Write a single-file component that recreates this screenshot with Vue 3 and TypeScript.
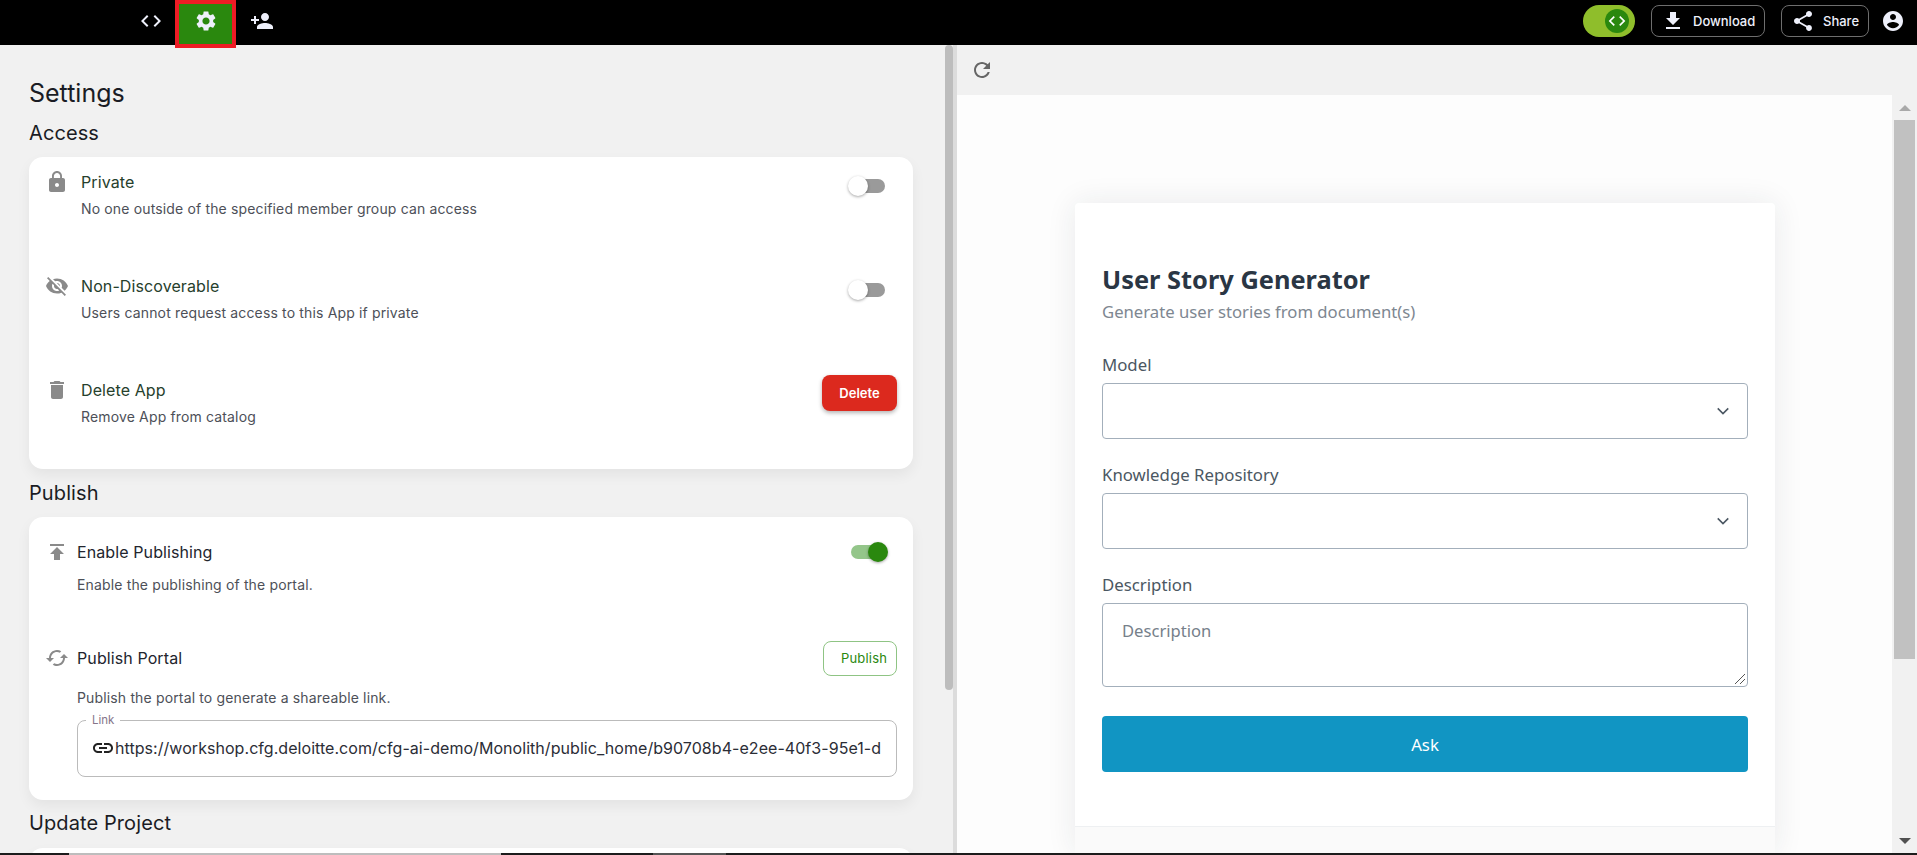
<script setup lang="ts">
const iconCode = 'M9.4 16.6 4.8 12l4.6-4.6L8 6l-6 6 6 6 1.4-1.4zm5.2 0 4.6-4.6-4.6-4.6L16 6l6 6-6 6-1.4-1.4z'
const gear = 'M19.14 12.94c.04-.3.06-.61.06-.94 0-.32-.02-.64-.07-.94l2.03-1.58c.18-.14.23-.41.12-.61l-1.92-3.32c-.12-.22-.37-.29-.59-.22l-2.39.96c-.5-.38-1.03-.7-1.62-.94l-.36-2.54c-.04-.24-.24-.41-.48-.41h-3.84c-.24 0-.43.17-.47.41l-.36 2.54c-.59.24-1.13.57-1.62.94l-2.39-.96c-.22-.08-.47 0-.59.22L2.74 8.87c-.12.21-.08.47.12.61l2.03 1.58c-.05.3-.09.63-.09.94s.02.64.07.94l-2.03 1.58c-.18.14-.23.41-.12.61l1.92 3.32c.12.22.37.29.59.22l2.39-.96c.5.38 1.03.7 1.62.94l.36 2.54c.05.24.24.41.48.41h3.84c.24 0 .44-.17.47-.41l.36-2.54c.59-.24 1.13-.56 1.62-.94l2.39.96c.22.08.47 0 .59-.22l1.92-3.32c.12-.22.07-.47-.12-.61l-2.01-1.58zM12 15.6c-1.98 0-3.6-1.62-3.6-3.6s1.62-3.6 3.6-3.6 3.6 1.62 3.6 3.6-1.62 3.6-3.6 3.6z'
const personAdd = 'M15 12c2.21 0 4-1.79 4-4s-1.79-4-4-4-4 1.79-4 4 1.79 4 4 4zm-9-2V7H4v3H1v2h3v3h2v-3h3v-2H6zm9 4c-2.67 0-8 1.34-8 4v2h16v-2c0-2.66-5.33-4-8-4z'
const account = 'M12 2C6.48 2 2 6.48 2 12s4.48 10 10 10 10-4.48 10-10S17.52 2 12 2zm0 3c1.66 0 3 1.34 3 3s-1.34 3-3 3-3-1.34-3-3 1.34-3 3-3zm0 14.2c-2.5 0-4.71-1.28-6-3.22.03-1.99 4-3.08 6-3.08 1.99 0 5.97 1.09 6 3.08-1.29 1.94-3.5 3.22-6 3.22z'
const download = 'M19 9h-4V3H9v6H5l7 7 7-7zM5 18v2h14v-2H5z'
const share = 'M18 16.08c-.76 0-1.44.3-1.96.77L8.91 12.7c.05-.23.09-.46.09-.7s-.04-.47-.09-.7l7.05-4.11c.54.5 1.25.81 2.04.81 1.66 0 3-1.34 3-3s-1.34-3-3-3-3 1.34-3 3c0 .24.04.47.09.7L8.04 9.81C7.5 9.31 6.79 9 6 9c-1.66 0-3 1.34-3 3s1.34 3 3 3c.79 0 1.5-.31 2.04-.81l7.12 4.16c-.05.21-.08.43-.08.65 0 1.61 1.31 2.92 2.92 2.92s2.92-1.31 2.92-2.92-1.31-2.92-2.92-2.92z'
const refresh = 'M17.65 6.35C16.2 4.9 14.21 4 12 4c-4.42 0-7.99 3.58-7.99 8s3.57 8 7.99 8c3.73 0 6.84-2.55 7.73-6h-2.08c-.82 2.33-3.04 4-5.65 4-3.31 0-6-2.69-6-6s2.69-6 6-6c1.66 0 3.14.69 4.22 1.78L13 11h7V4l-2.35 2.35z'
const lock = 'M18 8h-1V6c0-2.76-2.24-5-5-5S7 3.24 7 6v2H6c-1.1 0-2 .9-2 2v10c0 1.1.9 2 2 2h12c1.1 0 2-.9 2-2V10c0-1.1-.9-2-2-2zm-6 9c-1.1 0-2-.9-2-2s.9-2 2-2 2 .9 2 2-.9 2-2 2zm3.1-9H8.9V6c0-1.71 1.39-3.1 3.1-3.1 1.71 0 3.1 1.39 3.1 3.1v2z'
const eyeOff = 'M12 7c2.76 0 5 2.24 5 5 0 .65-.13 1.26-.36 1.83l2.92 2.92c1.51-1.26 2.7-2.89 3.43-4.75-1.73-4.39-6-7.5-11-7.5-1.4 0-2.74.25-3.98.7l2.16 2.16C10.74 7.13 11.35 7 12 7zM2 4.27l2.28 2.28.46.46C3.08 8.3 1.78 10.02 1 12c1.73 4.39 6 7.5 11 7.5 1.55 0 3.03-.3 4.38-.84l.42.42L19.73 22 21 20.73 3.27 3 2 4.27zM7.53 9.8l1.55 1.55c-.05.21-.08.43-.08.65 0 1.66 1.34 3 3 3 .22 0 .44-.03.65-.08l1.55 1.55c-.67.33-1.41.53-2.2.53-2.76 0-5-2.24-5-5 0-.79.2-1.53.53-2.2zm4.31-.78 3.15 3.15.02-.16c0-1.66-1.34-3-3-3l-.17.01z'
const trash = 'M6 19c0 1.1.9 2 2 2h8c1.1 0 2-.9 2-2V7H6v12zM19 4h-3.5l-1-1h-5l-1 1H5v2h14V4z'
const publish = 'M5 4v2h14V4H5zm0 10h4v6h6v-6h4l-7-7-7 7z'
const syncAlt = 'M12 4V1L8 5l4 4V6c3.31 0 6 2.69 6 6 0 1.01-.25 1.97-.7 2.8l1.46 1.46C19.54 15.03 20 13.57 20 12c0-4.42-3.58-8-8-8zm0 14c-3.31 0-6-2.69-6-6 0-1.01.25-1.97.7-2.8L5.24 7.74C4.46 8.97 4 10.43 4 12c0 4.42 3.58 8 8 8v3l4-4-4-4v3z'
const link = 'M3.9 12c0-1.71 1.39-3.1 3.1-3.1h4V7H7c-2.76 0-5 2.24-5 5s2.24 5 5 5h4v-1.9H7c-1.71 0-3.1-1.39-3.1-3.1zM8 13h8v-2H8v2zm9-6h-4v1.9h4c1.71 0 3.1 1.39 3.1 3.1s-1.39 3.1-3.1 3.1h-4V17h4c2.76 0 5-2.24 5-5s-2.24-5-5-5z'
</script>

<template>
  <div class="page">
    <header class="topbar">
      <div class="tabs">
        <button class="tab"><svg viewBox="0 0 24 24" class="i24"><path :d="iconCode" /></svg></button>
        <button class="tab active"><svg viewBox="0 0 24 24" class="i24"><path :d="gear" /></svg></button>
        <button class="tab last"><svg viewBox="0 0 24 24" class="i24"><path :d="personAdd" /></svg></button>
      </div>
      <div class="actions">
        <div class="mode"><span class="knob"><svg viewBox="0 0 24 24" class="i20"><path :d="iconCode" /></svg></span></div>
        <button class="hbtn dl"><svg viewBox="0 0 24 24" class="i24"><path :d="download" /></svg>Download</button>
        <button class="hbtn sh"><svg viewBox="0 0 24 24" class="i24"><path :d="share" /></svg>Share</button>
        <svg viewBox="0 0 24 24" class="i24 acct"><path :d="account" /></svg>
      </div>
    </header>

    <main class="split">
      <section class="left">
        <div class="leftscroll">
          <h1>Settings</h1>
          <h2>Access</h2>
          <div class="card access">
            <div class="row r1">
              <svg viewBox="0 0 24 24" class="i24 ic"><path :d="lock" /></svg>
              <div class="txt"><div class="ttl green">Private</div><div class="sub">No one outside of the specified member group can access</div></div>
              <span class="sw"><i class="track" /><i class="thumb" /></span>
            </div>
            <div class="row r2">
              <svg viewBox="0 0 24 24" class="i24 ic"><path :d="eyeOff" /></svg>
              <div class="txt"><div class="ttl green">Non-Discoverable</div><div class="sub">Users cannot request access to this App if private</div></div>
              <span class="sw"><i class="track" /><i class="thumb" /></span>
            </div>
            <div class="row r3">
              <svg viewBox="0 0 24 24" class="i24 ic"><path :d="trash" /></svg>
              <div class="txt"><div class="ttl green">Delete App</div><div class="sub">Remove App from catalog</div></div>
              <button class="del">Delete</button>
            </div>
          </div>
          <h2 class="pub">Publish</h2>
          <div class="card publish">
            <div class="prow p1">
              <svg viewBox="0 0 24 24" class="i24 ic"><path :d="publish" /></svg>
              <div class="txt"><div class="ttl">Enable Publishing</div><div class="sub s2">Enable the publishing of the portal.</div></div>
              <span class="sw on"><i class="track" /><i class="thumb" /></span>
            </div>
            <div class="prow p2">
              <svg viewBox="0 0 24 24" class="i24 ic"><path :d="syncAlt" transform="rotate(90 12 12)" /></svg>
              <div class="txt"><div class="ttl">Publish Portal</div></div>
              <button class="pubbtn">Publish</button>
            </div>
            <div class="sub s3">Publish the portal to generate a shareable link.</div>
            <fieldset class="linkbox">
              <legend>Link</legend>
              <svg viewBox="0 0 24 24" class="i24 lk"><path :d="link" /></svg>
              <div class="url">https://workshop.cfg.deloitte.com/cfg-ai-demo/Monolith/public_home/b90708b4-e2ee-40f3-95e1-d</div>
            </fieldset>
          </div>
          <h2 class="upd">Update Project</h2>
          <div class="card stub" />
        </div>
        <div class="lthumb" />
      </section>
      <div class="divider" />

      <section class="right">
        <div class="rtool"><svg viewBox="0 0 24 24" class="i24 rf"><path :d="refresh" /></svg></div>
        <div class="rbody">
          <div class="preview">
            <div class="formcard">
              <div class="formin">
                <h3>User Story Generator</h3>
                <p class="lead">Generate user stories from document(s)</p>
                <label>Model</label>
                <div class="sel"><svg viewBox="0 0 16 16" class="chev"><path d="m2 5 6 6 6-6" /></svg></div>
                <label>Knowledge Repository</label>
                <div class="sel"><svg viewBox="0 0 16 16" class="chev"><path d="m2 5 6 6 6-6" /></svg></div>
                <label>Description</label>
                <div class="ta">Description
                  <svg viewBox="0 0 12 12" class="grip"><path d="M1 11 11 1M6 11l5-5" /></svg>
                </div>
                <button class="ask">Ask</button>
              </div>
              <div class="formfoot" />
            </div>
          </div>
          <div class="rscroll">
            <span class="up" /><div class="rthumb" /><span class="down" />
          </div>
        </div>
      </section>
    </main>
    <div class="hbar"><i class="b1" /><i class="b2" /><i class="b3" /><i class="b4" /></div>
  </div>
</template>

<style>
html, body { margin: 0; height: 100%; overflow: hidden; background: #fff; }
</style>

<style scoped>
.page { width: 1917px; height: 855px; overflow: hidden; display: flex; flex-direction: column; font-family: Inter, "Liberation Sans", sans-serif; position: relative; }
button { font-family: inherit; cursor: pointer; }
svg { fill: currentColor; display: block; flex: none; }
.i24 { width: 24px; height: 24px; }
.i20 { width: 20px; height: 20px; }

.topbar { height: 45px; flex: none; background: #000; display: flex; justify-content: space-between; align-items: flex-start; color: #eef0fb; }
.tabs { display: flex; margin-left: 126px; }
.tab { width: 49px; height: 42px; padding: 0; background: none; border: 0; color: #eef0fb; display: flex; align-items: center; justify-content: center; }
.tab.active { box-sizing: border-box; width: 61px; height: 48px; background: #2a880e; border: 4px solid #ee1c25; position: relative; z-index: 2; padding-bottom: 6px; }
.tab.last { width: 52px; }
.actions { display: flex; align-items: center; height: 42px; margin-right: 12px; }
.mode { width: 52px; height: 32px; border-radius: 16px; background: #8fbe2b; position: relative; margin-right: 16px; }
.knob { position: absolute; right: 6px; top: 4px; width: 24px; height: 24px; border-radius: 50%; background: #2a880e; display: flex; align-items: center; justify-content: center; color: #fff; }
.hbtn { height: 32px; box-sizing: border-box; background: none; border: 1px solid #6e6e6e; border-radius: 8px; color: #eef0fb; font-size: 13px; font-weight: 500; display: flex; align-items: center; padding: 0 0 0 9px; gap: 8px; }
.dl { width: 114px; margin-right: 16px; }
.sh { width: 88px; margin-right: 12px; }

.split { flex: 1; display: flex; min-height: 0; }
.left { width: 953px; flex: none; background: #f1f1f1; position: relative; overflow: hidden; }
.divider { width: 4px; flex: none; background: #dcdcdc; }
.leftscroll { padding: 0 29px; box-sizing: border-box; }
h1 { margin: 33px 0 0; font-size: 25px; line-height: 30px; font-weight: 400; color: #1a1c24; }
h2 { margin: 10px 0 0; font-size: 20px; line-height: 30px; font-weight: 400; color: #1a1c24; letter-spacing: .1px; }
.card { background: #fff; border-radius: 14px; box-shadow: 0 6px 14px rgba(0,0,0,.06); margin-top: 9px; width: 884px; box-sizing: border-box; }
.access { height: 312px; padding: 0 16px; }
.row { display: flex; align-items: flex-start; height: 104px; padding-top: 13px; box-sizing: border-box; }
.ic { color: #8a8a8a; }
.txt { margin-left: 12px; flex: 1; min-width: 0; }
.ttl { font-size: 16px; line-height: 24px; color: #22252e; letter-spacing: .1px; }
.green { color: #26402c; }
.sub { font-size: 14px; line-height: 20px; color: #4d5058; margin-top: 5px; letter-spacing: .15px; }
.sw { width: 37px; height: 22px; position: relative; margin: 5px 12px 0 0; flex: none; }
.track { position: absolute; left: 5px; right: 0; top: 4px; height: 14px; border-radius: 7px; background: #9a9a9a; }
.thumb { position: absolute; left: 0; top: 1px; width: 20px; height: 20px; border-radius: 50%; background: #fff; box-shadow: 0 1px 3px rgba(0,0,0,.35); }
.sw.on { margin: 1px 9px 0 0; }
.sw.on .track { left: 0; right: 2px; background: #94c68a; }
.sw.on .thumb { left: 17px; background: #2a880e; }
.del { width: 75px; height: 36px; border: 0; border-radius: 8px; background: #dc291e; color: #fff; font-size: 13px; font-weight: 600; box-shadow: 0 2px 4px rgba(0,0,0,.3); padding: 0; margin-top: -3px; }

h2.pub { margin-top: 9px; }
.publish { height: 283px; padding: 0 16px; }
.prow { display: flex; align-items: flex-start; }
.prow .txt { margin-left: 8px; }
.p1 { height: 118px; padding-top: 23px; box-sizing: border-box; }
.sub.s2 { margin-top: 11px; }
.p2 { height: 46px; align-items: center; }
.pubbtn { width: 74px; height: 35px; box-sizing: border-box; border: 1px solid #8fc484; border-radius: 8px; background: #fff; color: #2a880e; font-size: 13px; font-weight: 400; letter-spacing: .2px; padding: 0 0 0 8px; }
.sub.s3 { margin: 7px 0 0 32px; }
.linkbox { margin: 6px 0 0 32px; padding: 0 13px; border: 1px solid #bbb; border-radius: 8px; height: 63px; box-sizing: border-box; display: flex; align-items: center; min-width: 0; width: 820px; }
.linkbox legend { font-size: 11.5px; line-height: 12px; color: #85758a; padding: 0 6px; margin-left: -5px; }
.lk { color: #222; margin-top: -6px; }
.url { font-size: 16px; line-height: 24px; color: #2b2d36; white-space: nowrap; overflow: hidden; flex: 1; min-width: 0; margin-top: -6px; letter-spacing: .05px; }
h2.upd { margin-top: 8px; }
.stub { height: 60px; margin-top: 10px; }
.lthumb { position: absolute; right: 0; top: 0; width: 8px; height: 645px; background: #bdbdbd; border-radius: 4px; }

.right { flex: 1; display: flex; flex-direction: column; min-width: 0; }
.rtool { height: 50px; background: #f1f1f1; display: flex; align-items: center; flex: none; }
.rf { color: #666; margin-left: 13px; }
.rbody { flex: 1; display: flex; min-height: 0; background: #fff; }
.preview { flex: 1; min-width: 0; padding: 108px 0 0 118px; box-sizing: border-box; background: #fdfdfd; overflow: hidden; }
.formcard { width: 700px; height: 650px; background: #fff; box-shadow: 0 0 30px rgba(30,40,60,.09); border-radius: 4px 4px 0 0; }
.formin { height: 624px; padding: 60px 27px 0; box-sizing: border-box; border-bottom: 1px solid #eef0f2; }
.formfoot { height: 26px; background: #fafafa; }
h3 { margin: 0; font-family: "Noto Sans", "Open Sans", sans-serif; font-weight: 700; font-size: 25.4px; line-height: 32px; color: #2a3644; }
.lead { margin: 5px 0 29px; font-family: "Noto Sans", sans-serif; font-size: 16.7px; line-height: 24px; color: #7e8791; }
label { display: block; font-family: "Noto Sans", sans-serif; font-size: 16.8px; line-height: 24px; color: #4b5762; }
.sel { height: 56px; box-sizing: border-box; border: 1px solid #a3afbb; border-radius: 4px; margin: 6px 0 24px; position: relative; }
.chev { position: absolute; right: 17px; top: 20px; width: 14px; height: 14px; fill: none; stroke: #4b5762; stroke-width: 1.8; }
.ta { height: 84px; box-sizing: border-box; border: 1px solid #a3afbb; border-radius: 4px; margin-top: 6px; padding: 15px 19px; font-family: "Noto Sans", sans-serif; font-size: 16.6px; line-height: 24px; color: #76808a; position: relative; }
.grip { position: absolute; right: 1px; bottom: 1px; width: 12px; height: 12px; fill: none; stroke: #555; stroke-width: 1; }
.ask { display: block; width: 100%; height: 56px; margin-top: 29px; border: 0; border-radius: 4px; background: #1195c3; color: #fff; font-family: "Noto Sans", sans-serif; font-size: 16.8px; }
.rscroll { width: 25px; flex: none; background: #f1f1f1; position: relative; }
.up, .down { position: absolute; left: 7px; width: 0; height: 0; border-left: 6px solid transparent; border-right: 6px solid transparent; }
.up { top: 10px; border-bottom: 6px solid #a9a9a9; }
.down { bottom: 11px; border-top: 6px solid #505050; }
.rthumb { position: absolute; left: 2px; right: 2px; top: 25px; height: 539px; background: #c1c1c1; }

.hbar { position: absolute; left: 0; right: 0; bottom: 0; height: 2px; background: #1c1c1c; display: flex; z-index: 3; }
.hbar i { display: block; height: 100%; }
.b1 { width: 69px; }
.b2 { width: 432px; background: #bdbdbd; }
.b3 { width: 152px; }
.b4 { width: 73px; background: #555; }
</style>
